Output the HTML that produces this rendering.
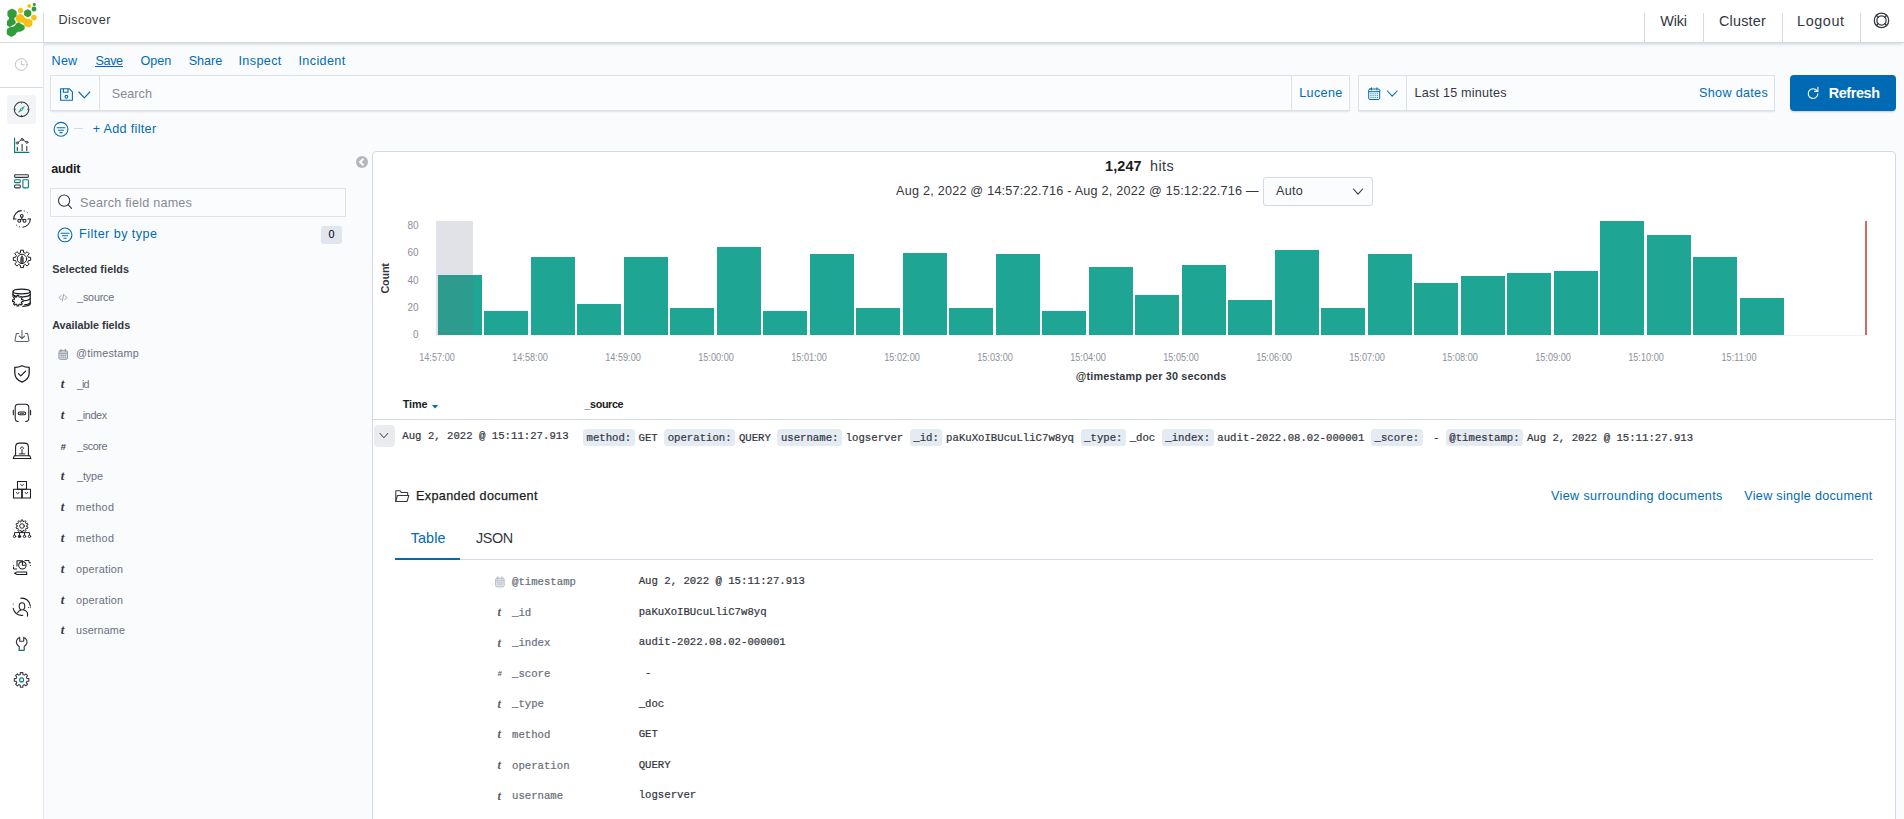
<!DOCTYPE html>
<html lang="en">
<head>
<meta charset="utf-8">
<title>Discover</title>
<style>
html,body{margin:0;padding:0}
body{width:1904px;height:819px;overflow:hidden;position:relative;background:#fafbfd;
  font-family:"Liberation Sans",sans-serif;color:#343741;-webkit-font-smoothing:antialiased}
.a{position:absolute;box-sizing:border-box}
.t{position:absolute;white-space:pre;line-height:1}
svg{position:absolute;overflow:visible}
.hdr{left:0;top:0;width:1904px;height:43px;background:#fff;border-bottom:1px solid #d3dae6;
  box-shadow:0 2px 3px -1px rgba(152,162,179,.45)}
.nav{left:0;top:43px;width:44px;height:776px;background:#fff;border-right:1px solid #e3e7ef}
.vsep{width:1px;background:#d3dae6}
.hsep{height:1px;background:#d3dae6}
.fld{background:#fbfcfd;border:1px solid #dde2ea;box-shadow:0 1px 1px -1px rgba(152,162,179,.3),0 2px 2px -1px rgba(152,162,179,.25)}
.panel{left:372px;top:151px;width:1524px;height:680px;background:#fff;border:1px solid #d3dae6;border-radius:4px}
.bar{position:absolute;background:#1ea593}
.dt{position:absolute;background:#e4ebf3;border-radius:3.6px;top:429px;height:16.5px}
.ico{stroke-linecap:round;stroke-linejoin:round;fill:none}
.m{font-family:"Liberation Mono",monospace;-webkit-text-stroke:.22px currentColor}
.sf{font-family:"Liberation Serif",serif}
</style>
</head>
<body>
<div class="a hdr"></div>
<svg style="left:0px;top:0px" width="44" height="42" viewBox="0 0 44 42"><path d="M12.05 13.7L11.4 23" stroke="#2f9e38" stroke-width="5.4" stroke-linecap="round"/><polygon points="12.05,10.60 14.73,12.15 14.73,15.25 12.05,16.80 9.37,15.25 9.37,12.15" fill="#2f9e38" stroke="#2f9e38" stroke-width="3.90" stroke-linejoin="round"/><polygon points="11.30,20.09 13.82,21.54 13.82,24.46 11.30,25.91 8.78,24.46 8.78,21.54" fill="#2f9e38" stroke="#2f9e38" stroke-width="3.67" stroke-linejoin="round"/><path d="M11.5 31.7L19.9 26.7" stroke="#fff" stroke-width="9.8" stroke-linecap="round"/><path d="M11.5 31.7L19.9 26.7" stroke="#2f9e38" stroke-width="7.0" stroke-linecap="butt"/><polygon points="11.40,28.65 14.08,30.20 14.08,33.30 11.40,34.85 8.72,33.30 8.72,30.20" fill="#2f9e38" stroke="#2f9e38" stroke-width="3.90" stroke-linejoin="round"/><polygon points="20.00,23.55 22.68,25.10 22.68,28.20 20.00,29.75 17.32,28.20 17.32,25.10" fill="#2f9e38" stroke="#2f9e38" stroke-width="3.90" stroke-linejoin="round"/><polygon points="27.70,10.78 29.79,11.99 29.79,14.41 27.70,15.62 25.61,14.41 25.61,11.99" fill="#2f9e38" stroke="#2f9e38" stroke-width="3.04" stroke-linejoin="round"/><polygon points="34.00,7.45 35.34,8.22 35.34,9.78 34.00,10.55 32.66,9.78 32.66,8.22" fill="#2f9e38" stroke="#2f9e38" stroke-width="1.95" stroke-linejoin="round"/><polygon points="34.30,3.51 35.16,4.00 35.16,5.00 34.30,5.49 33.44,5.00 33.44,4.00" fill="#2f9e38" stroke="#2f9e38" stroke-width="1.25" stroke-linejoin="round"/><path d="M20.1 18.3L28.2 23" stroke="#fff" stroke-width="8.6" stroke-linecap="round"/><path d="M20.1 18.3L28.2 23" stroke="#f5c116" stroke-width="5.8" stroke-linecap="butt"/><polygon points="20.10,15.51 22.52,16.91 22.52,19.70 20.10,21.09 17.68,19.70 17.68,16.91" fill="#f5c116" stroke="#f5c116" stroke-width="3.51" stroke-linejoin="round"/><polygon points="28.20,20.21 30.62,21.61 30.62,24.39 28.20,25.79 25.78,24.39 25.78,21.61" fill="#f5c116" stroke="#f5c116" stroke-width="3.51" stroke-linejoin="round"/><polygon points="20.60,8.76 22.10,9.63 22.10,11.37 20.60,12.24 19.10,11.37 19.10,9.63" fill="#f5c116" stroke="#f5c116" stroke-width="2.18" stroke-linejoin="round"/><polygon points="33.90,15.80 35.46,16.70 35.46,18.50 33.90,19.40 32.34,18.50 32.34,16.70" fill="#f5c116" stroke="#f5c116" stroke-width="2.26" stroke-linejoin="round"/><polygon points="29.30,4.76 30.37,5.38 30.37,6.62 29.30,7.24 28.23,6.62 28.23,5.38" fill="#f5c116" stroke="#f5c116" stroke-width="1.56" stroke-linejoin="round"/></svg>
<div class="a vsep" style="left:43px;top:13px;height:30px"></div>
<div class="a vsep" style="left:1644px;top:13px;height:30px"></div>
<div class="a vsep" style="left:1703px;top:13px;height:30px"></div>
<div class="a vsep" style="left:1782px;top:13px;height:30px"></div>
<div class="a vsep" style="left:1860px;top:13px;height:30px"></div>
<svg style="left:0;top:0" width="1904" height="819" viewBox="0 0 1904 819"><g class="ico" stroke="#343741" stroke-width="1.25"><circle cx="1881.5" cy="20.4" r="7.2"/><circle cx="1881.5" cy="20.4" r="4.6"/><path d="M1876.4 15.299999999999999l2.1 2.1M1886.6 15.299999999999999l-2.1 2.1M1876.4 25.5l2.1 -2.1M1886.6 25.5l-2.1 -2.1"/></g></svg>
<div class="a nav"></div>
<div class="a hsep" style="left:0;top:87px;width:43px"></div>
<div class="a" style="left:7px;top:95px;width:29px;height:28.5px;border-radius:4px;background:#f2f4f8"></div>
<svg style="left:0;top:0" width="1904" height="819" viewBox="0 0 1904 819"><g class="ico" stroke="#b9bdc6" stroke-width="1"><circle cx="21.3" cy="64.5" r="5.9"/><path d="M21.3 61.2v3.6h3"/></g><g class="ico" stroke="#343741" stroke-width="1.1"><circle cx="21.55" cy="109.3" r="7.3"/><path d="M21.55 102.5v1.1M21.55 116.1v-1.1M14.75 109.3h1.1M28.35 109.3h-1.1" stroke-width=".9" stroke-linecap="butt"/></g><path d="M25.150000000000002 105.7L22.55 110.3L17.95 112.89999999999999L20.55 108.3z" fill="#1ea593"/><circle cx="21.55" cy="109.3" r=".7" fill="#d9f0ec"/><path class="ico" d="M14.6 138v14.4h14.3" stroke="#017d73" stroke-width="1.1"/><path class="ico" d="M17.3 147.3v3.2M22.1 144.2v6.3M26.8 146.4v4.1" stroke="#343741" stroke-width="1.1"/><g class="ico" stroke="#343741" stroke-width=".9"><path d="M18 142.4l3.2-2.4M23 140l3 1.8"/><circle cx="17.2" cy="143" r="1.1"/><circle cx="22.1" cy="139.4" r="1.1"/><circle cx="26.9" cy="142.3" r="1.1"/></g><g class="ico" stroke-width="1.1"><rect x="14.6" y="174.8" width="13.8" height="2.6" rx=".9" stroke="#343741"/><rect x="14.6" y="179.8" width="5.7" height="2.8" rx=".9" stroke="#017d73"/><rect x="14.6" y="185" width="5.7" height="2.9" rx=".9" stroke="#343741"/><rect x="22.9" y="179.8" width="5.5" height="8.1" rx=".9" stroke="#017d73"/></g><g class="ico" stroke="#1a1c21" stroke-width="1.05"><path d="M13.70 218.90A8.3 8.3 0 0 1 21.28 210.63M30.30 218.90A8.3 8.3 0 0 1 22.72 227.17"/><path d="M13.70 218.90h2.4M30.30 218.90h-2.4"/><path d="M24.15 210.88A8.3 8.3 0 0 1 29.19 214.75M19.85 226.92A8.3 8.3 0 0 1 14.81 223.05" stroke-dasharray=".5 2.8" stroke-width=".9"/><circle cx="21.8" cy="215.9" r="1.35"/><circle cx="19.3" cy="220.8" r="1.5"/><circle cx="24.5" cy="220.8" r="1.5"/><path d="M21.8 217.3v1.6l-1.6 1M21.8 218.9l1.6 1"/></g><path class="ico" d="M20.41 252.49L20.51 250.23L23.49 250.23L23.59 252.49L25.40 253.25L27.08 251.71L29.19 253.82L27.65 255.50L28.41 257.31L30.67 257.41L30.67 260.39L28.41 260.49L27.65 262.30L29.19 263.98L27.08 266.09L25.40 264.55L23.59 265.31L23.49 267.57L20.51 267.57L20.41 265.31L18.60 264.55L16.92 266.09L14.81 263.98L16.35 262.30L15.59 260.49L13.33 260.39L13.33 257.41L15.59 257.31L16.35 255.50L14.81 253.82L16.92 251.71L18.60 253.25z" stroke="#1a1c21" stroke-width="1"/><circle class="ico" cx="22" cy="258.9" r="4.7" stroke="#1a1c21" stroke-width="1"/><path d="M20.7 262.5v-4.6l1.3-2.3l1.3 2.3v4.6z" fill="#555a65" stroke="#1a1c21" stroke-width=".6"/><g class="ico" stroke="#1a1c21" stroke-width="1.2"><ellipse cx="21.6" cy="291.5" rx="8.6" ry="2.3"/><path d="M13 291.5v5M30.2 291.5v12.2"/><path d="M13 294.6c.6 1 2.600 1.700 5.400 2M30.200 294.600c-.8 1.300-3.600 2.100-7.600 2.200"/><path d="M30.200 298.700c-.6 1-2.700 1.700-5.600 1.900M30.200 302.800c-.6 1-2.700 1.700-5.400 1.900M30.200 303.700c0 1.400-2.800 2.400-7.400 2.600"/></g><path d="M16.97 296.81L17.01 295.37L18.79 295.37L18.83 296.81L19.99 297.29L21.04 296.31L22.29 297.56L21.31 298.61L21.79 299.77L23.23 299.81L23.23 301.59L21.79 301.63L21.31 302.79L22.29 303.84L21.04 305.09L19.99 304.11L18.83 304.59L18.79 306.03L17.01 306.03L16.97 304.59L15.81 304.11L14.76 305.09L13.51 303.84L14.49 302.79L14.01 301.63L12.57 301.59L12.57 299.81L14.01 299.77L14.49 298.61L13.51 297.56L14.76 296.31L15.81 297.29z" fill="#fff" stroke="#1a1c21" stroke-width="1.1" stroke-linejoin="round"/><g class="ico" stroke="#5a606b" stroke-width="1.05"><path d="M18.600 333.400h-2.200l-1.300 6.400c-.200 1 .300 1.700 1.300 1.700h11.200c1 0 1.500-.700 1.300-1.700l-1.300-6.400h-2.200"/><path d="M22 330.300v8M19.300 336l2.700 2.600l2.700-2.600"/></g><g class="ico" stroke="#1a1c21" stroke-width="1.25"><path d="M22 365.700c-2.300 1.100-4.700 1.600-7.200 1.700v5.600c0 4.300 2.700 7.300 7.200 9.200c4.500-1.900 7.200-4.900 7.200-9.200v-5.600c-2.500-.100-4.900-.600-7.200-1.700z"/><path d="M18.400 373.600l2.400 2.300l4.800-4.800"/></g><g class="ico" stroke="#1a1c21" stroke-width="1.05"><path d="M18.300 421.400c-1.900 0-3.100-1.200-3.100-3.100v-11c0-1.900 1.200-3.100 3.100-3.100h7.400c1.900 0 3.100 1.200 3.100 3.100v11c0 1.900-1.200 3.100-3.100 3.100"/><path d="M13.300 410.200v4.600M30.600 410.200v4.600"/><rect x="18.200" y="411.900" width="7.400" height="2.900" rx="1.200"/><path d="M20 413.350h3.800" stroke-width=".8"/></g><g class="ico" stroke="#1a1c21" stroke-width="1.05"><path d="M15.600 455.600v-8.600c0-2.500 1.400-3.900 3.900-3.900h5c2.500 0 3.900 1.400 3.900 3.900v8.600"/><path d="M14.300 455.800h15.500l1.100 2.800h-17.700z"/><path d="M22 453.600v-4.400M20.400 448.400c0-2 3.200-2 3.200 0M19.300 453.900h5.600" stroke-width=".95"/></g><g class="ico" stroke="#1a1c21" stroke-width="1.05" stroke-linejoin="miter"><rect x="17.500" y="481.500" width="9" height="7.700"/><rect x="13.500" y="489.200" width="8.200" height="8.800"/><rect x="22.300" y="489.200" width="8.200" height="8.800"/><path d="M20.800 484.300c0 2 2.600 2 2.600 0M16.500 492.400c0 1.800 2.400 1.800 2.400 0M25.200 492.400c0 1.800 2.400 1.800 2.400 0" stroke-width=".9"/></g><path class="ico" d="M21.12 521.38L21.20 519.95L22.80 519.95L22.88 521.38L24.00 521.75L24.91 520.64L26.20 521.58L25.43 522.78L26.12 523.74L27.50 523.37L28.00 524.89L26.66 525.41L26.66 526.59L28.00 527.11L27.50 528.63L26.12 528.26L25.43 529.22L26.20 530.42L24.91 531.36L24.00 530.25L22.88 530.62L22.80 532.05L21.20 532.05L21.12 530.62L20.00 530.25L19.09 531.36L17.80 530.42L18.57 529.22L17.88 528.26L16.50 528.63L16.00 527.11L17.34 526.59L17.34 525.41L16.00 524.89L16.50 523.37L17.88 523.74L18.57 522.78L17.80 521.58L19.09 520.64L20.00 521.75z" stroke="#1a1c21" stroke-width=".95"/><g class="ico" stroke="#1a1c21" stroke-width=".95"><circle cx="22" cy="526" r="2.300"/><path d="M22 531.400v1.200M14.500 535v-2.400h15v2.400M19.500 532.600v2.400M24.500 532.600v2.400"/><circle cx="14.500" cy="536.400" r="1.200"/><circle cx="19.500" cy="536.400" r="1.200" fill="#1a1c21"/><circle cx="24.500" cy="536.400" r="1.200"/><circle cx="29.500" cy="536.400" r="1.200"/></g><g class="ico" stroke="#1a1c21" stroke-width="1.05"><path d="M17 566v-5.300h5.500"/><circle cx="22.400" cy="565.300" r="3.700"/><path d="M22.400 562.300v3h2.600"/><path d="M25 560.500h4v2.300h1.500M13.500 567v2h3.200" stroke-width=".95"/><path d="M17.200 571.900h9.500v2.600h-9.500l-2.700-1.300z"/></g><circle cx="13.600" cy="565.200" r=".55" fill="#1a1c21"/><circle cx="30.300" cy="565.500" r=".55" fill="#1a1c21"/><g class="ico" stroke="#1a1c21" stroke-width="1.05"><path d="M20.60 598.20A8.6 8.6 0 0 1 30.40 606.10"/><path d="M13.20 608.30A8.6 8.6 0 0 0 22.80 615.30"/><ellipse cx="22.0" cy="606.3000000000001" rx="2.800" ry="3.600"/><path d="M17.6 612.7c.9-1.700 2.200-2.300 3.300-2.700M23.7 609.9000000000001c2.600.8 3.800 1.900 3.800 3.700v2.500"/></g><circle cx="13.200" cy="604" r=".5" fill="#1a1c21"/><circle cx="28.600" cy="607.500" r=".5" fill="#1a1c21"/><circle cx="30.300" cy="607.500" r=".5" fill="#1a1c21"/><path class="ico" d="M19.700 637.400c-2 .8-3.300 2.600-3.300 4.700c0 1.900 1.100 3.500 2.800 4.400v3.300M23.700 637.400c2 .8 3.300 2.600 3.300 4.700c0 1.900-1.100 3.500-2.800 4.400v3.300M19.700 637.400v3.800h4v-3.800" stroke="#343741" stroke-width="1.1"/><path d="M19 650.400h5.100" stroke="#017d73" stroke-width="1.1" stroke-linecap="round"/><path class="ico" d="M20.25 674.47L20.34 672.61L22.86 672.61L22.95 674.47L24.49 675.10L25.87 673.86L27.64 675.63L26.40 677.01L27.03 678.55L28.89 678.64L28.89 681.16L27.03 681.25L26.40 682.79L27.64 684.17L25.87 685.94L24.49 684.70L22.95 685.33L22.86 687.19L20.34 687.19L20.25 685.33L18.71 684.70L17.33 685.94L15.56 684.17L16.80 682.79L16.17 681.25L14.31 681.16L14.31 678.64L16.17 678.55L16.80 677.01L15.56 675.63L17.33 673.86L18.71 675.10z" stroke="#343741" stroke-width="1.05"/><circle class="ico" cx="21.600" cy="679.900" r="2" stroke="#017d73" stroke-width="1.100"/></svg>
<div class="a" style="left:95.3px;top:66px;width:27.8px;height:1px;background:#006bb4"></div>
<div class="a fld" style="left:50px;top:75px;width:1300px;height:36px"></div>
<div class="a vsep" style="left:99px;top:76px;height:34px;background:#dde2ea"></div>
<div class="a vsep" style="left:1291px;top:76px;height:34px;background:#dde2ea"></div>
<svg style="left:0;top:0" width="1904" height="819" viewBox="0 0 1904 819"><g class="ico" stroke="#006bb4" stroke-width="1.1"><path d="M60.6 88.8h8.8l3 3v8.5h-11.8z"/><path d="M63.4 89.0v3.3h4.6v-3.3"/><circle cx="66.4" cy="96.8" r="1.4"/></g></svg>
<svg style="left:0;top:0" width="1904" height="819" viewBox="0 0 1904 819"><path class="ico" d="M78.8 92.0L84.3 97.80000000000001L89.8 92.0" stroke="#006bb4" stroke-width="1.1"/></svg>
<div class="a fld" style="left:1358px;top:75px;width:417px;height:36px"></div>
<div class="a vsep" style="left:1406px;top:76px;height:34px;background:#dde2ea"></div>
<svg style="left:0;top:0" width="1904" height="819" viewBox="0 0 1904 819"><rect x="1368.7" y="89.0" width="11" height="10.50" rx="1.3" class="ico" stroke="#006bb4" stroke-width="1"/><path class="ico" stroke="#006bb4" stroke-width="1" d="M1368.7 91.7h11M1371.5 87.80000000000001v2.2M1376.9 87.80000000000001v2.2"/><rect x="1370.30" y="93.30" width="1.2" height="1" fill="#006bb4" opacity=".85"/><rect x="1372.45" y="93.30" width="1.2" height="1" fill="#006bb4" opacity=".85"/><rect x="1374.60" y="93.30" width="1.2" height="1" fill="#006bb4" opacity=".85"/><rect x="1376.75" y="93.30" width="1.2" height="1" fill="#006bb4" opacity=".85"/><rect x="1370.30" y="95.20" width="1.2" height="1" fill="#006bb4" opacity=".85"/><rect x="1372.45" y="95.20" width="1.2" height="1" fill="#006bb4" opacity=".85"/><rect x="1374.60" y="95.20" width="1.2" height="1" fill="#006bb4" opacity=".85"/><rect x="1376.75" y="95.20" width="1.2" height="1" fill="#006bb4" opacity=".85"/><rect x="1370.30" y="97.10" width="1.2" height="1" fill="#006bb4" opacity=".85"/><rect x="1372.45" y="97.10" width="1.2" height="1" fill="#006bb4" opacity=".85"/><rect x="1374.60" y="97.10" width="1.2" height="1" fill="#006bb4" opacity=".85"/><rect x="1376.75" y="97.10" width="1.2" height="1" fill="#006bb4" opacity=".85"/></svg>
<svg style="left:0;top:0" width="1904" height="819" viewBox="0 0 1904 819"><path class="ico" d="M1387.4 91.0L1392.2 96.19999999999999L1397.0 91.0" stroke="#006bb4" stroke-width="1.1"/></svg>
<div class="a" style="left:1790px;top:74.7px;width:106.2px;height:36.1px;border-radius:4px;background:#006bb4;box-shadow:0 2px 2px -1px rgba(54,97,126,.3)"></div>
<svg style="left:0;top:0" width="1904" height="819" viewBox="0 0 1904 819"><g class="ico" stroke="#fff" stroke-width="1.1" stroke-linecap="butt"><path d="M1817.25 91.17A4.85 4.85 0 1 0 1817.90 93.77"/><path d="M1814.45 91.40H1817.90V87.30"/></g></svg>
<svg style="left:0;top:0" width="1904" height="819" viewBox="0 0 1904 819"><g class="ico" stroke="#006bb4" stroke-width="1.1"><circle cx="61" cy="129.3" r="6.9"/><path d="M57.1 127.70000000000002h7.8M58.5 130.20000000000002h5M59.9 132.60000000000002h2.2"/></g></svg>
<div class="a" style="left:74px;top:128px;width:9px;height:1px;background:#d3dae6"></div>
<svg style="left:0;top:0" width="1904" height="819" viewBox="0 0 1904 819"><circle cx="362" cy="162" r="6" fill="#b3b6be"/><path d="M363.5 158.8L360.1 162L363.5 165.2" fill="none" stroke="#fafbfd" stroke-width="2.1" stroke-linejoin="miter"/></svg>
<div class="a fld" style="left:50px;top:188px;width:296px;height:28.7px;box-shadow:none"></div>
<svg style="left:0;top:0" width="1904" height="819" viewBox="0 0 1904 819"><g class="ico" stroke="#343741" stroke-width="1.1"><circle cx="64.1" cy="200.6" r="5.6"/><path d="M68.2 204.8l3.4 3.6"/></g></svg>
<svg style="left:0;top:0" width="1904" height="819" viewBox="0 0 1904 819"><g class="ico" stroke="#006bb4" stroke-width="1.1"><circle cx="65" cy="234.9" r="6.9"/><path d="M61.1 233.3h7.8M62.5 235.8h5M63.9 238.20000000000002h2.2"/></g></svg>
<div class="a" style="left:321px;top:226px;width:21px;height:17.6px;border-radius:3px;background:#e0e5ee"></div>
<svg style="left:0;top:0" width="1904" height="819" viewBox="0 0 1904 819"><g class="ico" stroke="#8e96a5" stroke-width=".9"><path d="M61.0 295.6L59.199999999999996 297.6L61.0 299.6M65.0 295.6L66.8 297.6L65.0 299.6M63.8 294.20000000000005L62.199999999999996 301.0"/></g></svg>
<svg style="left:0;top:0" width="1904" height="819" viewBox="0 0 1904 819"><rect x="58.9" y="350.59999999999997" width="8.6" height="8.8" rx="1.4" fill="#8e96a5" opacity=".35"/><rect x="58.9" y="350.59999999999997" width="8.6" height="8.8" rx="1.4" class="ico" stroke="#8e96a5" stroke-width=".9"/><path class="ico" stroke="#8e96a5" stroke-width="1.1" d="M61.1 349.4v2M65.3 349.4v2"/><path stroke="#8e96a5" stroke-width=".9" d="M58.9 353.3h8.6"/><path stroke="#8e96a5" stroke-width="1.1" d="M60.6 355.4h5.2M60.6 357.3h5.2" stroke-dasharray="1.2 .8"/></svg>
<div class="a panel"></div>
<div class="a" style="left:1263px;top:177px;width:110px;height:28.5px;border:1px solid #d3dae6;border-radius:3px;background:#fbfcfd;box-shadow:0 1px 1px -1px rgba(152,162,179,.3)"></div>
<svg style="left:0;top:0" width="1904" height="819" viewBox="0 0 1904 819"><path class="ico" d="M1353.4 189.0L1358 194.2L1362.6 189.0" stroke="#343741" stroke-width="1.1"/></svg>
<div class="a" style="left:436.2px;top:221px;width:36.5px;height:114.3px;background:#e0e2e7"></div>
<div class="bar" style="left:437.7px;top:274.80px;width:44.1px;height:60.50px"></div>
<div class="bar" style="left:484.2px;top:310.55px;width:44.1px;height:24.75px"></div>
<div class="bar" style="left:530.7px;top:256.93px;width:44.1px;height:78.38px"></div>
<div class="bar" style="left:577.2px;top:303.68px;width:44.1px;height:31.62px"></div>
<div class="bar" style="left:623.7px;top:256.93px;width:44.1px;height:78.38px"></div>
<div class="bar" style="left:670.2px;top:307.80px;width:44.1px;height:27.50px"></div>
<div class="bar" style="left:716.7px;top:247.30px;width:44.1px;height:88.00px"></div>
<div class="bar" style="left:763.2px;top:310.55px;width:44.1px;height:24.75px"></div>
<div class="bar" style="left:809.7px;top:254.18px;width:44.1px;height:81.12px"></div>
<div class="bar" style="left:856.2px;top:307.80px;width:44.1px;height:27.50px"></div>
<div class="bar" style="left:902.7px;top:252.80px;width:44.1px;height:82.50px"></div>
<div class="bar" style="left:949.2px;top:307.80px;width:44.1px;height:27.50px"></div>
<div class="bar" style="left:995.7px;top:254.18px;width:44.1px;height:81.12px"></div>
<div class="bar" style="left:1042.2px;top:310.55px;width:44.1px;height:24.75px"></div>
<div class="bar" style="left:1088.7px;top:266.55px;width:44.1px;height:68.75px"></div>
<div class="bar" style="left:1135.2px;top:295.43px;width:44.1px;height:39.88px"></div>
<div class="bar" style="left:1181.7px;top:265.18px;width:44.1px;height:70.12px"></div>
<div class="bar" style="left:1228.2px;top:299.55px;width:44.1px;height:35.75px"></div>
<div class="bar" style="left:1274.7px;top:250.05px;width:44.1px;height:85.25px"></div>
<div class="bar" style="left:1321.2px;top:307.80px;width:44.1px;height:27.50px"></div>
<div class="bar" style="left:1367.7px;top:254.18px;width:44.1px;height:81.12px"></div>
<div class="bar" style="left:1414.2px;top:283.05px;width:44.1px;height:52.25px"></div>
<div class="bar" style="left:1460.7px;top:276.18px;width:44.1px;height:59.12px"></div>
<div class="bar" style="left:1507.2px;top:273.43px;width:44.1px;height:61.88px"></div>
<div class="bar" style="left:1553.7px;top:270.68px;width:44.1px;height:64.62px"></div>
<div class="bar" style="left:1600.2px;top:221.18px;width:44.1px;height:114.12px"></div>
<div class="bar" style="left:1646.7px;top:234.93px;width:44.1px;height:100.38px"></div>
<div class="bar" style="left:1693.2px;top:256.93px;width:44.1px;height:78.38px"></div>
<div class="bar" style="left:1739.7px;top:298.18px;width:44.1px;height:37.12px"></div>
<div class="a" style="left:437.7px;top:274.80px;width:35px;height:60.50px;background:#2d9c8f"></div>
<div class="a" style="left:436px;top:335.3px;width:1431px;height:1px;background:#eff1f5"></div>
<div class="a" style="left:1865.3px;top:221px;width:1.5px;height:114.3px;background:#d36a6a"></div>
<svg style="left:432px;top:404.6px" width="6.2" height="3.4" viewBox="0 0 6.2 3.4"><path d="M0 0h6.2L3.1 3.4z" fill="#006bb4"/></svg>
<div class="a hsep" style="left:373px;top:419px;width:1522px"></div>
<div class="a" style="left:373.7px;top:425px;width:21px;height:21.6px;border-radius:4px;background:#e9ebee"></div>
<svg style="left:0;top:0" width="1904" height="819" viewBox="0 0 1904 819"><path class="ico" d="M380.0 433.40000000000003L383.9 437.8L387.79999999999995 433.40000000000003" stroke="#343741" stroke-width="1.0"/></svg>
<div class="dt" style="left:582.9px;width:52.0px"></div>
<div class="dt" style="left:664.1px;width:71.2px"></div>
<div class="dt" style="left:777.3px;width:64.8px"></div>
<div class="dt" style="left:909.7px;width:32.8px"></div>
<div class="dt" style="left:1080.5px;width:45.6px"></div>
<div class="dt" style="left:1161.7px;width:52.0px"></div>
<div class="dt" style="left:1370.9px;width:52.0px"></div>
<div class="dt" style="left:1445.7px;width:77.6px"></div>
<svg style="left:0;top:0" width="1904" height="819" viewBox="0 0 1904 819"><g class="ico" stroke="#343741" stroke-width="1.05"><path d="M395.8 501.4v-10.6h4.3l1.3 1.8h6.3v2.3"/><path d="M395.8 501.4l1.6 -5.9h11.4l-1.7 5.9z"/></g></svg>
<div class="a hsep" style="left:395px;top:559px;width:1478px"></div>
<div class="a" style="left:395px;top:558px;width:65px;height:2px;background:#006bb4"></div>
<svg style="left:0;top:0" width="1904" height="819" viewBox="0 0 1904 819"><rect x="495.6" y="578.0999999999999" width="8.6" height="8.8" rx="1.4" fill="#b2b8c4" opacity=".35"/><rect x="495.6" y="578.0999999999999" width="8.6" height="8.8" rx="1.4" class="ico" stroke="#b2b8c4" stroke-width=".9"/><path class="ico" stroke="#b2b8c4" stroke-width="1.1" d="M497.8 576.9v2M502.0 576.9v2"/><path stroke="#b2b8c4" stroke-width=".9" d="M495.6 580.8h8.6"/><path stroke="#b2b8c4" stroke-width="1.1" d="M497.3 582.9h5.2M497.3 584.8h5.2" stroke-dasharray="1.2 .8"/></svg>
<!-- text layer -->
<span class="t" style="top:13.80px;font-size:12.6px;color:#343741;letter-spacing:0.444px;left:58.40px;">Discover</span>
<span class="t" style="top:14.30px;font-size:14.4px;color:#343741;letter-spacing:-0.158px;left:1660.30px;">Wiki</span>
<span class="t" style="top:14.30px;font-size:14.4px;color:#343741;letter-spacing:0.202px;left:1719.00px;">Cluster</span>
<span class="t" style="top:14.30px;font-size:14.4px;color:#343741;letter-spacing:0.577px;left:1797.10px;">Logout</span>
<span class="t" style="top:55.00px;font-size:12.6px;color:#006bb4;letter-spacing:0.201px;left:51.60px;">New</span>
<span class="t" style="top:55.00px;font-size:12.6px;color:#006bb4;letter-spacing:-0.434px;left:95.60px;">Save</span>
<span class="t" style="top:55.00px;font-size:12.6px;color:#006bb4;letter-spacing:-0.068px;left:140.60px;">Open</span>
<span class="t" style="top:55.00px;font-size:12.6px;color:#006bb4;letter-spacing:-0.025px;left:188.70px;">Share</span>
<span class="t" style="top:55.00px;font-size:12.6px;color:#006bb4;letter-spacing:0.366px;left:238.50px;">Inspect</span>
<span class="t" style="top:55.00px;font-size:12.6px;color:#006bb4;letter-spacing:0.370px;left:298.50px;">Incident</span>
<span class="t" style="top:87.80px;font-size:12.6px;color:#858a96;letter-spacing:0.060px;left:111.70px;">Search</span>
<span class="t" style="top:87.00px;font-size:12.6px;color:#006bb4;letter-spacing:0.357px;left:1299.20px;">Lucene</span>
<span class="t" style="top:87.00px;font-size:12.6px;color:#343741;letter-spacing:0.221px;left:1414.50px;">Last 15 minutes</span>
<span class="t" style="top:87.00px;font-size:12.6px;color:#006bb4;letter-spacing:0.310px;left:1699.10px;">Show dates</span>
<span class="t" style="top:86.00px;font-size:14.4px;color:#fff;font-weight:700;letter-spacing:-0.383px;left:1828.70px;">Refresh</span>
<span class="t" style="top:122.60px;font-size:12.6px;color:#006bb4;letter-spacing:0.322px;left:92.70px;">+ Add filter</span>
<span class="t" style="top:162.70px;font-size:12.6px;color:#1a1c21;font-weight:700;letter-spacing:-0.197px;left:51.20px;">audit</span>
<span class="t" style="top:197.10px;font-size:12.6px;color:#858a96;letter-spacing:0.235px;left:80.10px;">Search field names</span>
<span class="t" style="top:227.70px;font-size:12.6px;color:#006bb4;letter-spacing:0.447px;left:79.10px;">Filter by type</span>
<span class="t" style="top:228.90px;font-size:10.8px;color:#000;left:-168.60px;width:1000px;text-align:center;">0</span>
<span class="t" style="top:263.70px;font-size:10.8px;color:#343741;font-weight:700;letter-spacing:0.085px;left:52.20px;">Selected fields</span>
<span class="t" style="top:292.00px;font-size:10.8px;color:#69707d;letter-spacing:-0.201px;left:77.10px;">_source</span>
<span class="t" style="top:319.70px;font-size:10.8px;color:#343741;font-weight:700;letter-spacing:-0.014px;left:52.20px;">Available fields</span>
<span class="t" style="top:348.00px;font-size:10.8px;color:#69707d;letter-spacing:0.216px;left:76.00px;">@timestamp</span>
<span class="t" style="top:379.00px;font-size:10.8px;color:#69707d;letter-spacing:-1.002px;left:77.00px;">_id</span>
<span class="t sf" style="top:378.40px;font-size:12.8px;color:#343741;font-weight:700;left:60.80px;font-style:italic;">t</span>
<span class="t" style="top:410.00px;font-size:10.8px;color:#69707d;letter-spacing:-0.344px;left:77.00px;">_index</span>
<span class="t sf" style="top:409.40px;font-size:12.8px;color:#343741;font-weight:700;left:60.80px;font-style:italic;">t</span>
<span class="t" style="top:441.00px;font-size:10.8px;color:#69707d;letter-spacing:-0.360px;left:77.00px;">_score</span>
<span class="t" style="top:441.80px;font-size:9.6px;color:#343741;font-weight:700;left:60.40px;font-style:italic;">#</span>
<span class="t" style="top:471.00px;font-size:10.8px;color:#69707d;letter-spacing:-0.102px;left:77.00px;">_type</span>
<span class="t sf" style="top:470.40px;font-size:12.8px;color:#343741;font-weight:700;left:60.80px;font-style:italic;">t</span>
<span class="t" style="top:502.00px;font-size:10.8px;color:#69707d;letter-spacing:0.398px;left:76.00px;">method</span>
<span class="t sf" style="top:501.40px;font-size:12.8px;color:#343741;font-weight:700;left:60.80px;font-style:italic;">t</span>
<span class="t" style="top:533.00px;font-size:10.8px;color:#69707d;letter-spacing:0.398px;left:76.00px;">method</span>
<span class="t sf" style="top:532.40px;font-size:12.8px;color:#343741;font-weight:700;left:60.80px;font-style:italic;">t</span>
<span class="t" style="top:564.00px;font-size:10.8px;color:#69707d;letter-spacing:0.260px;left:76.00px;">operation</span>
<span class="t sf" style="top:563.40px;font-size:12.8px;color:#343741;font-weight:700;left:60.80px;font-style:italic;">t</span>
<span class="t" style="top:595.00px;font-size:10.8px;color:#69707d;letter-spacing:0.260px;left:76.00px;">operation</span>
<span class="t sf" style="top:594.40px;font-size:12.8px;color:#343741;font-weight:700;left:60.80px;font-style:italic;">t</span>
<span class="t" style="top:625.00px;font-size:10.8px;color:#69707d;letter-spacing:0.142px;left:76.00px;">username</span>
<span class="t sf" style="top:624.40px;font-size:12.8px;color:#343741;font-weight:700;left:60.80px;font-style:italic;">t</span>
<span class="t" style="top:159.00px;font-size:14.4px;color:#1a1c21;font-weight:700;letter-spacing:0.148px;left:1105.00px;">1,247</span>
<span class="t" style="top:159.00px;font-size:14.4px;color:#343741;letter-spacing:0.500px;left:1149.90px;">hits</span>
<span class="t" style="top:185.00px;font-size:12.6px;color:#343741;letter-spacing:0.238px;left:896.10px;">Aug 2, 2022 @ 14:57:22.716 - Aug 2, 2022 @ 15:12:22.716 —</span>
<span class="t" style="top:185.00px;font-size:12.6px;color:#343741;letter-spacing:0.299px;left:1276.00px;">Auto</span>
<span class="t" style="top:330.00px;font-size:10px;color:#8b909c;right:1485.44px;">0</span>
<span class="t" style="top:303.00px;font-size:10px;color:#8b909c;right:1485.44px;">20</span>
<span class="t" style="top:276.00px;font-size:10px;color:#8b909c;right:1485.44px;">40</span>
<span class="t" style="top:248.00px;font-size:10px;color:#8b909c;right:1485.44px;">60</span>
<span class="t" style="top:221.00px;font-size:10px;color:#8b909c;right:1485.44px;">80</span>
<span class="t" style="top:273.00px;font-size:10.8px;color:#343741;font-weight:700;letter-spacing:-0.196px;left:-114.70px;width:1000px;text-align:center;transform:rotate(-90deg);">Count</span>
<span class="t" style="top:353.00px;font-size:10px;color:#8b909c;left:-63.50px;width:1000px;text-align:center;transform:scaleX(.915);">14:57:00</span>
<span class="t" style="top:353.00px;font-size:10px;color:#8b909c;left:29.50px;width:1000px;text-align:center;transform:scaleX(.915);">14:58:00</span>
<span class="t" style="top:353.00px;font-size:10px;color:#8b909c;left:122.50px;width:1000px;text-align:center;transform:scaleX(.915);">14:59:00</span>
<span class="t" style="top:353.00px;font-size:10px;color:#8b909c;left:215.50px;width:1000px;text-align:center;transform:scaleX(.915);">15:00:00</span>
<span class="t" style="top:353.00px;font-size:10px;color:#8b909c;left:308.50px;width:1000px;text-align:center;transform:scaleX(.915);">15:01:00</span>
<span class="t" style="top:353.00px;font-size:10px;color:#8b909c;left:401.50px;width:1000px;text-align:center;transform:scaleX(.915);">15:02:00</span>
<span class="t" style="top:353.00px;font-size:10px;color:#8b909c;left:494.50px;width:1000px;text-align:center;transform:scaleX(.915);">15:03:00</span>
<span class="t" style="top:353.00px;font-size:10px;color:#8b909c;left:587.50px;width:1000px;text-align:center;transform:scaleX(.915);">15:04:00</span>
<span class="t" style="top:353.00px;font-size:10px;color:#8b909c;left:680.50px;width:1000px;text-align:center;transform:scaleX(.915);">15:05:00</span>
<span class="t" style="top:353.00px;font-size:10px;color:#8b909c;left:773.50px;width:1000px;text-align:center;transform:scaleX(.915);">15:06:00</span>
<span class="t" style="top:353.00px;font-size:10px;color:#8b909c;left:866.50px;width:1000px;text-align:center;transform:scaleX(.915);">15:07:00</span>
<span class="t" style="top:353.00px;font-size:10px;color:#8b909c;left:959.50px;width:1000px;text-align:center;transform:scaleX(.915);">15:08:00</span>
<span class="t" style="top:353.00px;font-size:10px;color:#8b909c;left:1052.50px;width:1000px;text-align:center;transform:scaleX(.915);">15:09:00</span>
<span class="t" style="top:353.00px;font-size:10px;color:#8b909c;left:1145.50px;width:1000px;text-align:center;transform:scaleX(.915);">15:10:00</span>
<span class="t" style="top:353.00px;font-size:10px;color:#8b909c;left:1238.50px;width:1000px;text-align:center;transform:scaleX(.915);">15:11:00</span>
<span class="t" style="top:371.30px;font-size:10.8px;color:#343741;font-weight:700;letter-spacing:0.178px;left:1075.80px;">@timestamp per 30 seconds</span>
<span class="t" style="top:398.60px;font-size:10.8px;color:#1a1c21;font-weight:700;letter-spacing:-0.100px;left:402.80px;">Time</span>
<span class="t" style="top:398.60px;font-size:10.8px;color:#1a1c21;font-weight:700;letter-spacing:-0.368px;left:584.40px;">_source</span>
<span class="t m" style="top:430.90px;font-size:10.67px;color:#343741;left:402.30px;">Aug 2, 2022 @ 15:11:27.913</span>
<span class="t m" style="top:433.30px;font-size:10.67px;color:#343741;left:586.50px;">method:</span>
<span class="t m" style="top:433.30px;font-size:10.67px;color:#343741;left:638.50px;">GET</span>
<span class="t m" style="top:433.30px;font-size:10.67px;color:#343741;left:667.70px;">operation:</span>
<span class="t m" style="top:433.30px;font-size:10.67px;color:#343741;left:738.90px;">QUERY</span>
<span class="t m" style="top:433.30px;font-size:10.67px;color:#343741;left:780.90px;">username:</span>
<span class="t m" style="top:433.30px;font-size:10.67px;color:#343741;left:845.70px;">logserver</span>
<span class="t m" style="top:433.30px;font-size:10.67px;color:#343741;left:913.30px;">_id:</span>
<span class="t m" style="top:433.30px;font-size:10.67px;color:#343741;left:946.10px;">paKuXoIBUcuLliC7w8yq</span>
<span class="t m" style="top:433.30px;font-size:10.67px;color:#343741;left:1084.10px;">_type:</span>
<span class="t m" style="top:433.30px;font-size:10.67px;color:#343741;left:1129.70px;">_doc</span>
<span class="t m" style="top:433.30px;font-size:10.67px;color:#343741;left:1165.30px;">_index:</span>
<span class="t m" style="top:433.30px;font-size:10.67px;color:#343741;left:1217.30px;">audit-2022.08.02-000001</span>
<span class="t m" style="top:433.30px;font-size:10.67px;color:#343741;left:1374.50px;">_score:</span>
<span class="t m" style="top:433.30px;font-size:10.67px;color:#343741;left:1432.90px;">-</span>
<span class="t m" style="top:433.30px;font-size:10.67px;color:#343741;left:1449.30px;">@timestamp:</span>
<span class="t m" style="top:433.30px;font-size:10.67px;color:#343741;left:1526.90px;">Aug 2, 2022 @ 15:11:27.913</span>
<span class="t" style="top:490.30px;font-size:12.6px;color:#1a1c21;letter-spacing:0.367px;left:416.00px;-webkit-text-stroke:0.25px #1a1c21;">Expanded document</span>
<span class="t" style="top:490.20px;font-size:12.6px;color:#006bb4;letter-spacing:0.365px;left:1551.00px;">View surrounding documents</span>
<span class="t" style="top:490.20px;font-size:12.6px;color:#006bb4;letter-spacing:0.301px;left:1744.30px;">View single document</span>
<span class="t" style="top:531.10px;font-size:14.4px;color:#006bb4;letter-spacing:0.050px;left:410.80px;">Table</span>
<span class="t" style="top:531.10px;font-size:14.4px;color:#343741;letter-spacing:-0.396px;left:475.90px;">JSON</span>
<span class="t m" style="top:576.90px;font-size:10.67px;color:#69707d;left:512.00px;">@timestamp</span>
<span class="t m" style="top:576.00px;font-size:10.67px;color:#343741;left:638.70px;">Aug 2, 2022 @ 15:11:27.913</span>
<span class="t m" style="top:607.53px;font-size:10.67px;color:#69707d;left:512.00px;">_id</span>
<span class="t m" style="top:606.63px;font-size:10.67px;color:#343741;left:638.70px;">paKuXoIBUcuLliC7w8yq</span>
<span class="t sf" style="top:605.93px;font-size:12.4px;color:#5a606b;font-weight:700;left:497.40px;font-style:italic;">t</span>
<span class="t m" style="top:638.16px;font-size:10.67px;color:#69707d;left:512.00px;">_index</span>
<span class="t m" style="top:637.26px;font-size:10.67px;color:#343741;left:638.70px;">audit-2022.08.02-000001</span>
<span class="t sf" style="top:636.56px;font-size:12.4px;color:#5a606b;font-weight:700;left:497.40px;font-style:italic;">t</span>
<span class="t m" style="top:668.79px;font-size:10.67px;color:#69707d;left:512.00px;">_score</span>
<span class="t m" style="top:667.89px;font-size:10.67px;color:#343741;left:645.10px;">-</span>
<span class="t" style="top:670.39px;font-size:7.8px;color:#5a606b;font-weight:700;left:497.40px;font-style:italic;">#</span>
<span class="t m" style="top:699.42px;font-size:10.67px;color:#69707d;left:512.00px;">_type</span>
<span class="t m" style="top:698.52px;font-size:10.67px;color:#343741;left:638.70px;">_doc</span>
<span class="t sf" style="top:697.82px;font-size:12.4px;color:#5a606b;font-weight:700;left:497.40px;font-style:italic;">t</span>
<span class="t m" style="top:730.05px;font-size:10.67px;color:#69707d;left:512.00px;">method</span>
<span class="t m" style="top:729.15px;font-size:10.67px;color:#343741;left:638.70px;">GET</span>
<span class="t sf" style="top:728.45px;font-size:12.4px;color:#5a606b;font-weight:700;left:497.40px;font-style:italic;">t</span>
<span class="t m" style="top:760.68px;font-size:10.67px;color:#69707d;left:512.00px;">operation</span>
<span class="t m" style="top:759.78px;font-size:10.67px;color:#343741;left:638.70px;">QUERY</span>
<span class="t sf" style="top:759.08px;font-size:12.4px;color:#5a606b;font-weight:700;left:497.40px;font-style:italic;">t</span>
<span class="t m" style="top:791.31px;font-size:10.67px;color:#69707d;left:512.00px;">username</span>
<span class="t m" style="top:790.41px;font-size:10.67px;color:#343741;left:638.70px;">logserver</span>
<span class="t sf" style="top:789.71px;font-size:12.4px;color:#5a606b;font-weight:700;left:497.40px;font-style:italic;">t</span>
</body>
</html>
